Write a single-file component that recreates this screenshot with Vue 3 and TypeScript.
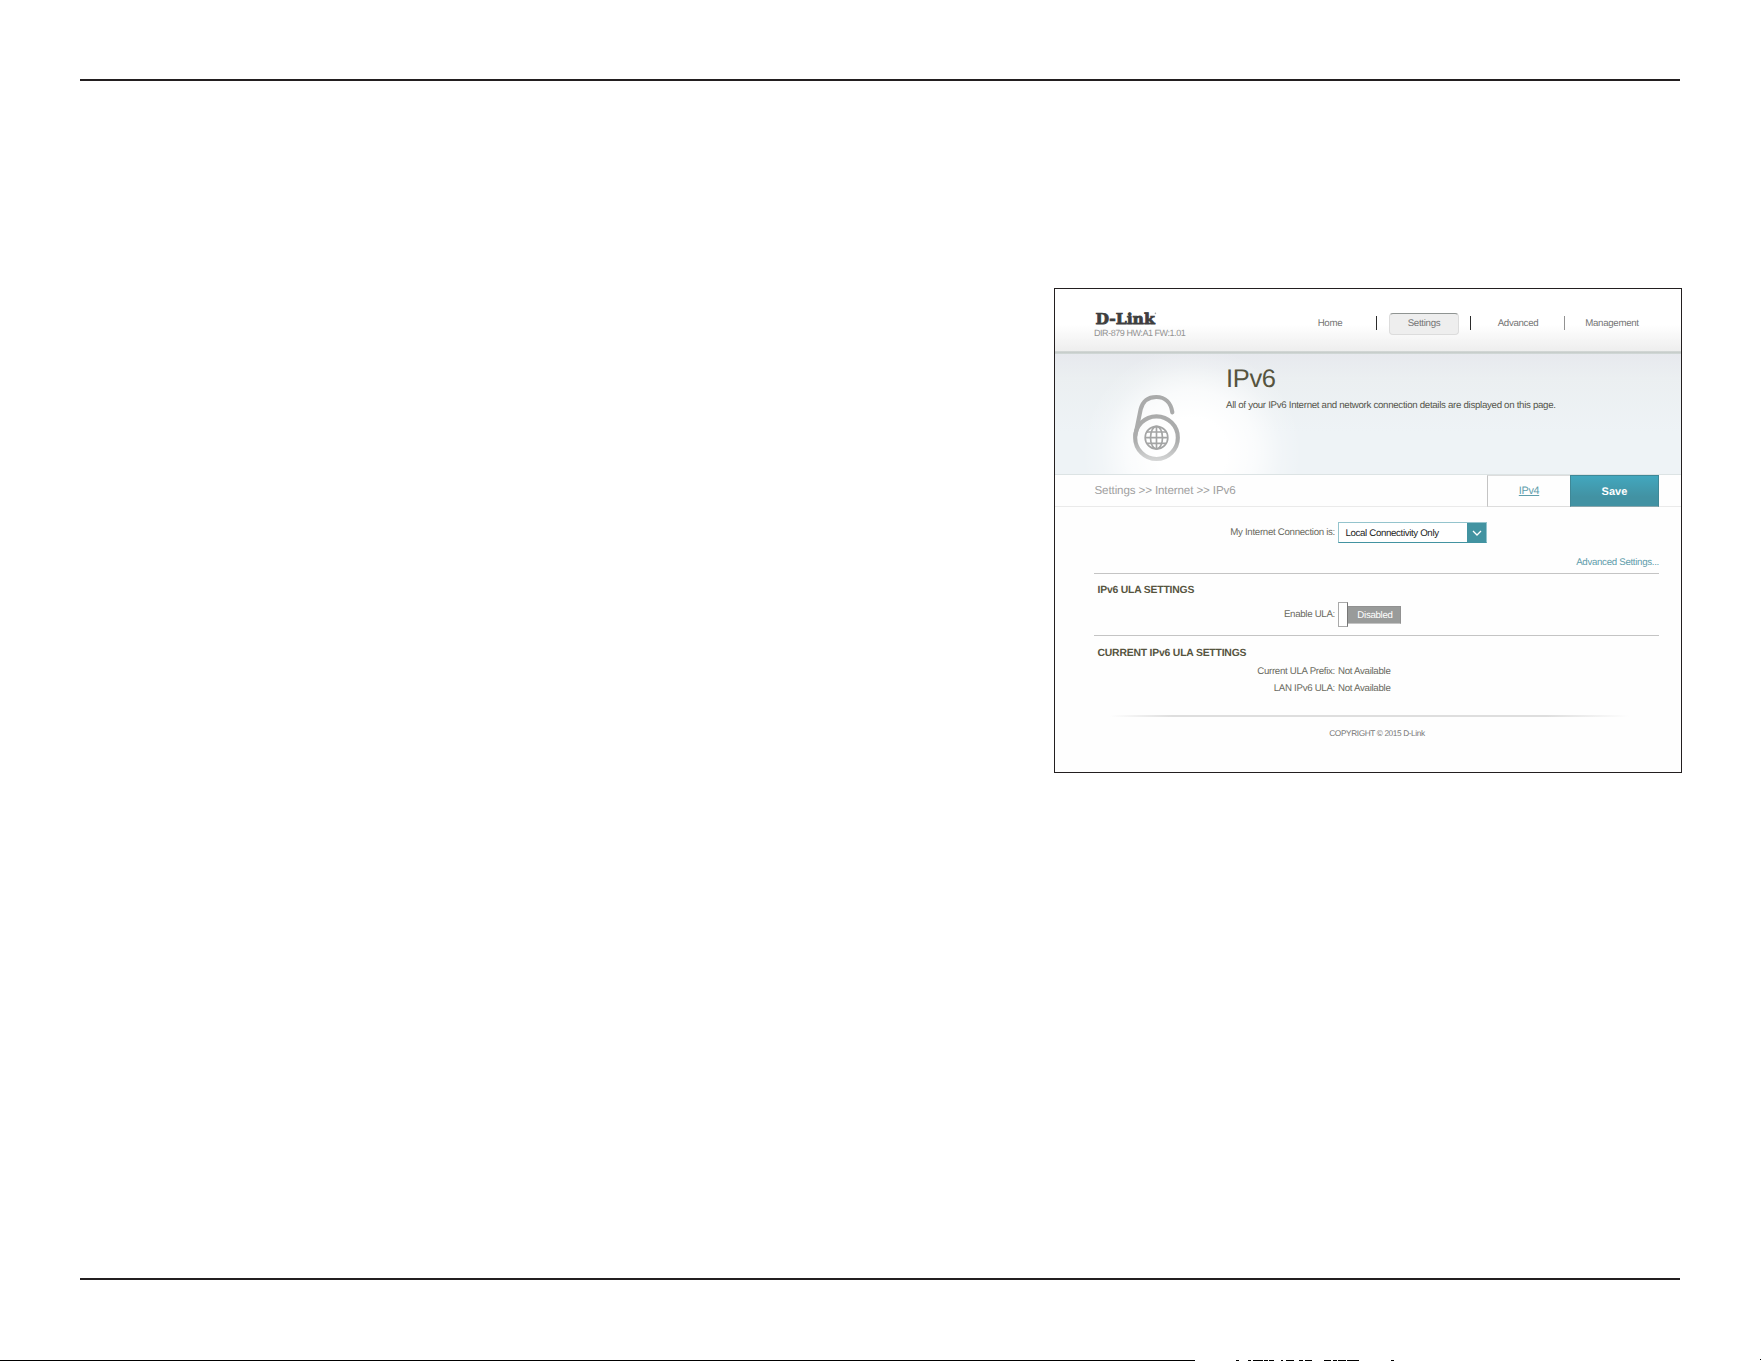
<script setup lang="ts">
interface NavItem {
  label: string
  active?: boolean
}

const nav: NavItem[] = [
  { label: 'Home' },
  { label: 'Settings', active: true },
  { label: 'Advanced' },
  { label: 'Management' },
]

const details = [
  { label: 'Current ULA Prefix:', value: 'Not Available' },
  { label: 'LAN IPv6 ULA:', value: 'Not Available' },
]

// [start, length] of each mark along the bottom edge of the page
const marks: number[][] = [
  [0, 1195], [1236, 3], [1248, 3], [1253, 10], [1264, 4], [1269, 5], [1281, 2],
  [1286, 8], [1299, 4], [1305, 7], [1324, 7], [1333, 4], [1338, 8], [1347, 12], [1391, 3],
]
</script>

<template>
  <div class="page">
    <div class="rule top"></div>
    <section class="frame">
      <header class="header">
        <div class="brand">
          <svg class="logo" width="66" height="22" viewBox="0 -4 66 22">
            <text x="1.4" y="13.2" textLength="59.4" lengthAdjust="spacingAndGlyphs">D-Link</text>
            <circle cx="61.4" cy="2.4" r="0.8" />
          </svg>
          <div class="model">DIR-879 HW:A1 FW:1.01</div>
        </div>
        <nav class="nav">
          <div v-for="item in nav" :key="item.label" class="cell">
            <a :class="['link', { active: item.active }]">{{ item.label }}</a>
          </div>
        </nav>
      </header>

      <div class="hero">
        <svg class="icon" width="80" height="90" viewBox="0 0 240 270" fill="none">
          <defs>
            <linearGradient id="metal" gradientUnits="userSpaceOnUse" x1="0" y1="45" x2="0" y2="243">
              <stop offset="0" stop-color="#a9aaaa" />
              <stop offset="0.7" stop-color="#acadad" />
              <stop offset="1" stop-color="#d6d7d7" />
            </linearGradient>
          </defs>
          <g stroke="url(#metal)" stroke-width="12.5" stroke-linecap="round">
            <circle cx="109.5" cy="173" r="64" />
            <path d="M46 166 L62 88 C69 60 88 51 109 51 C136 51 153 69 157 97" />
          </g>
          <g stroke="#a4a5a5" stroke-width="5">
            <circle cx="109.5" cy="173" r="34" />
            <ellipse cx="109.5" cy="173" rx="18" ry="34" />
            <path d="M109.5 139V207M76 173H143M81 156H138M81 190H138" />
          </g>
        </svg>
        <div class="intro">
          <h1>IPv6</h1>
          <p>All of your IPv6 Internet and network connection details are displayed on this page.</p>
        </div>
      </div>

      <div class="bar">
        <div class="crumbs">Settings &gt;&gt; Internet &gt;&gt; IPv6</div>
        <a class="tab"><span>IPv4</span></a>
        <div class="save">Save</div>
      </div>

      <main class="content">
        <div class="row connection">
          <span class="label">My Internet Connection is:</span>
          <div class="select">
            <span class="picked">Local Connectivity Only</span>
            <span class="arrow">
              <svg width="19" height="19" viewBox="0 0 19 19"><path d="M6 8l4 4 4-4" fill="none" stroke="#fff" stroke-width="1.3" /></svg>
            </span>
          </div>
        </div>
        <div class="more"><a>Advanced Settings...</a></div>
        <section class="group ula">
          <h2>IPv6 ULA SETTINGS</h2>
          <div class="row enable">
            <span class="label">Enable ULA:</span>
            <div class="toggle"><i></i><b>Disabled</b></div>
          </div>
        </section>
        <section class="group current">
          <h2>CURRENT IPv6 ULA SETTINGS</h2>
          <div v-for="d in details" :key="d.label" class="row detail">
            <span class="label">{{ d.label }}</span><span class="value">{{ d.value }}</span>
          </div>
        </section>
      </main>
      <footer class="footer">COPYRIGHT © 2015 D-Link</footer>
    </section>
    <div class="rule bottom"></div>
    <svg class="edge" width="1761" height="2" viewBox="0 0 1761 2" shape-rendering="crispEdges">
      <rect v-for="m in marks" :key="m[0]" :x="m[0]" y="1" :width="m[1]" height="1" />
      <rect x="1760" y="0" width="1" height="1" />
    </svg>
  </div>
</template>

<style>
body {
  margin: 0;
  background: #fff;
}
</style>

<style scoped>
.page {
  display: flex;
  flex-direction: column;
  width: 1761px;
  height: 1361px;
  overflow: hidden;
  background: #fff;
  font-family: "Liberation Sans", Arial, sans-serif;
  font-size: 9.7px;
  letter-spacing: -0.3px;
  color: #6a6a60;
  text-rendering: geometricPrecision;
}
.page * {
  box-sizing: border-box;
}
.rule {
  flex: none;
  width: 1600px;
  height: 2px;
  margin-left: 80px;
  background: #231f20;
}
.rule.top {
  margin-top: 79px;
}
.rule.bottom {
  margin-top: 505px;
}
.edge {
  flex: none;
  display: block;
  margin-top: auto;
}
.frame {
  flex: none;
  display: flex;
  flex-direction: column;
  width: 628px;
  height: 485px;
  margin: 207px 0 0 1054px;
  border: 1px solid #231f20;
  background: #fefefe;
}
.header {
  flex: none;
  display: flex;
  justify-content: space-between;
  height: 65px;
  padding-right: 22px;
  background:
    linear-gradient(#d9dddc, #c5cbc9 40%, #d3dad9) bottom / 100% 3px no-repeat,
    linear-gradient(#fff 55%, #ececec);
}
.brand {
  padding: 18px 0 0 39px;
}
.logo {
  display: block;
  overflow: visible;
}
.logo text {
  font: bold 15px "DejaVu Serif", serif;
  letter-spacing: 0;
  fill: #3e3e3e;
  stroke: #3e3e3e;
  stroke-width: 0.8px;
}
.logo circle {
  fill: #aaa;
}
.model {
  height: 11px;
  margin-top: -2px;
  line-height: 12px;
  font-size: 9px;
  letter-spacing: -0.45px;
  color: #929292;
  white-space: nowrap;
}
.nav {
  display: flex;
  padding-top: 24px;
}
.cell {
  display: flex;
  justify-content: center;
  width: 94px;
  height: 22px;
  background: linear-gradient(#2b2b2b, #2b2b2b) right 3px / 1px 14px no-repeat;
}
.cell:nth-child(3) {
  background-image: linear-gradient(#929292, #929292);
}
.cell:last-child {
  background: none;
}
.link {
  width: 70px;
  height: 22px;
  line-height: 21px;
  text-align: center;
  color: #757575;
}
.link.active {
  border: 1px solid #dcdcdc;
  border-top-color: #8f9492;
  border-radius: 4px;
  line-height: 19px;
  background: #eee;
}
.hero {
  flex: none;
  display: flex;
  height: 121px;
  border-bottom: 1px solid #dce3e4;
  background:
    radial-gradient(ellipse 110px 106px at 137px 98px, #fff 32%, rgba(255, 255, 255, 0.72) 58%, rgba(255, 255, 255, 0.2) 82%, rgba(255, 255, 255, 0)),
    linear-gradient(#e7e9ee, #ebeff1 20%, #eef3f6 65%);
}
.icon {
  margin: 26px 0 0 65px;
}
.intro {
  padding-left: 26px;
}
h1 {
  margin: 10px 0 0;
  height: 30px;
  line-height: 30px;
  font-size: 25.5px;
  letter-spacing: -0.35px;
  font-weight: 400;
  color: #56543e;
}
p {
  margin: 4px 0 0;
  line-height: 15px;
  white-space: nowrap;
  color: #55554b;
}
.bar {
  flex: none;
  display: flex;
  height: 32px;
  padding-right: 22px;
  border-bottom: 1px solid #eaeaea;
}
.crumbs {
  flex: 1;
  padding-left: 39.5px;
  line-height: 32px;
  font-size: 11.6px;
  letter-spacing: -0.12px;
  color: #a0a0a0;
}
.tab {
  width: 83px;
  height: 32px;
  border: 1px solid #ddd;
  border-left-color: #c4c4c4;
  border-right: 0;
  line-height: 31px;
  text-align: center;
  font-size: 10.8px;
  color: #5f9dab;
}
.tab span {
  text-decoration: underline;
}
.save {
  width: 89px;
  height: 32px;
  border: 1px solid #3f8897;
  border-bottom-color: #8aa6ac;
  line-height: 32px;
  text-align: center;
  font-size: 11px;
  letter-spacing: 0.1px;
  font-weight: 700;
  color: #fff;
  background: linear-gradient(#42a7be, #4292a3 70%);
}
.content {
  padding: 0 22px 0 39px;
}
.row {
  display: flex;
}
.label {
  width: 241px;
  margin-right: 3px;
  text-align: right;
}
.connection {
  height: 36px;
  padding-top: 15px;
}
.connection .label {
  line-height: 22px;
}
.select {
  display: flex;
  width: 149px;
  height: 21px;
  border: 1px solid #94c4cd;
  border-bottom-color: #4293a1;
  background: #fff;
}
.picked {
  flex: 1;
  padding-left: 6.5px;
  line-height: 22px;
  letter-spacing: -0.35px;
  color: #222;
  white-space: nowrap;
}
.arrow {
  width: 19px;
  height: 20px;
  background: #4293a1;
}
.arrow svg {
  display: block;
}
.more {
  height: 30px;
  padding-top: 12px;
  line-height: 15px;
  text-align: right;
  color: #5f9dab;
}
.group {
  border-top: 1px solid #c4c4c4;
}
.ula {
  height: 62px;
}
h2 {
  height: 23px;
  margin: 0;
  padding: 9px 0 0 3.5px;
  line-height: 15px;
  font-size: 10.4px;
  letter-spacing: -0.2px;
  font-weight: 700;
  color: #56543e;
}
.enable {
  padding-top: 5px;
}
.enable .label {
  line-height: 26px;
}
.toggle {
  display: flex;
  align-items: center;
  height: 25px;
}
.toggle i {
  width: 10px;
  height: 25px;
  border: 1px solid #aaa;
  border-right-color: #777;
  background: #fff;
}
.toggle b {
  width: 53px;
  height: 18px;
  padding-left: 2px;
  border: 1px solid #919191;
  border-left: 0;
  border-bottom-color: #c4c4c4;
  line-height: 17px;
  text-align: center;
  font-weight: 400;
  color: #fff;
  background: #999b9a;
}
.detail {
  height: 17px;
  line-height: 18px;
}
.current h2 {
  padding-top: 10px;
  height: 27px;
}
.footer {
  margin: 18px 52px 0 55px;
  padding: 12px 0 0 15px;
  line-height: 12px;
  text-align: center;
  font-size: 8.3px;
  letter-spacing: -0.4px;
  color: #777;
  background: linear-gradient(90deg, rgba(217, 217, 217, 0), #dedede 12%, #dedede 84%, rgba(217, 217, 217, 0)) top / 100% 2px no-repeat;
}
</style>
